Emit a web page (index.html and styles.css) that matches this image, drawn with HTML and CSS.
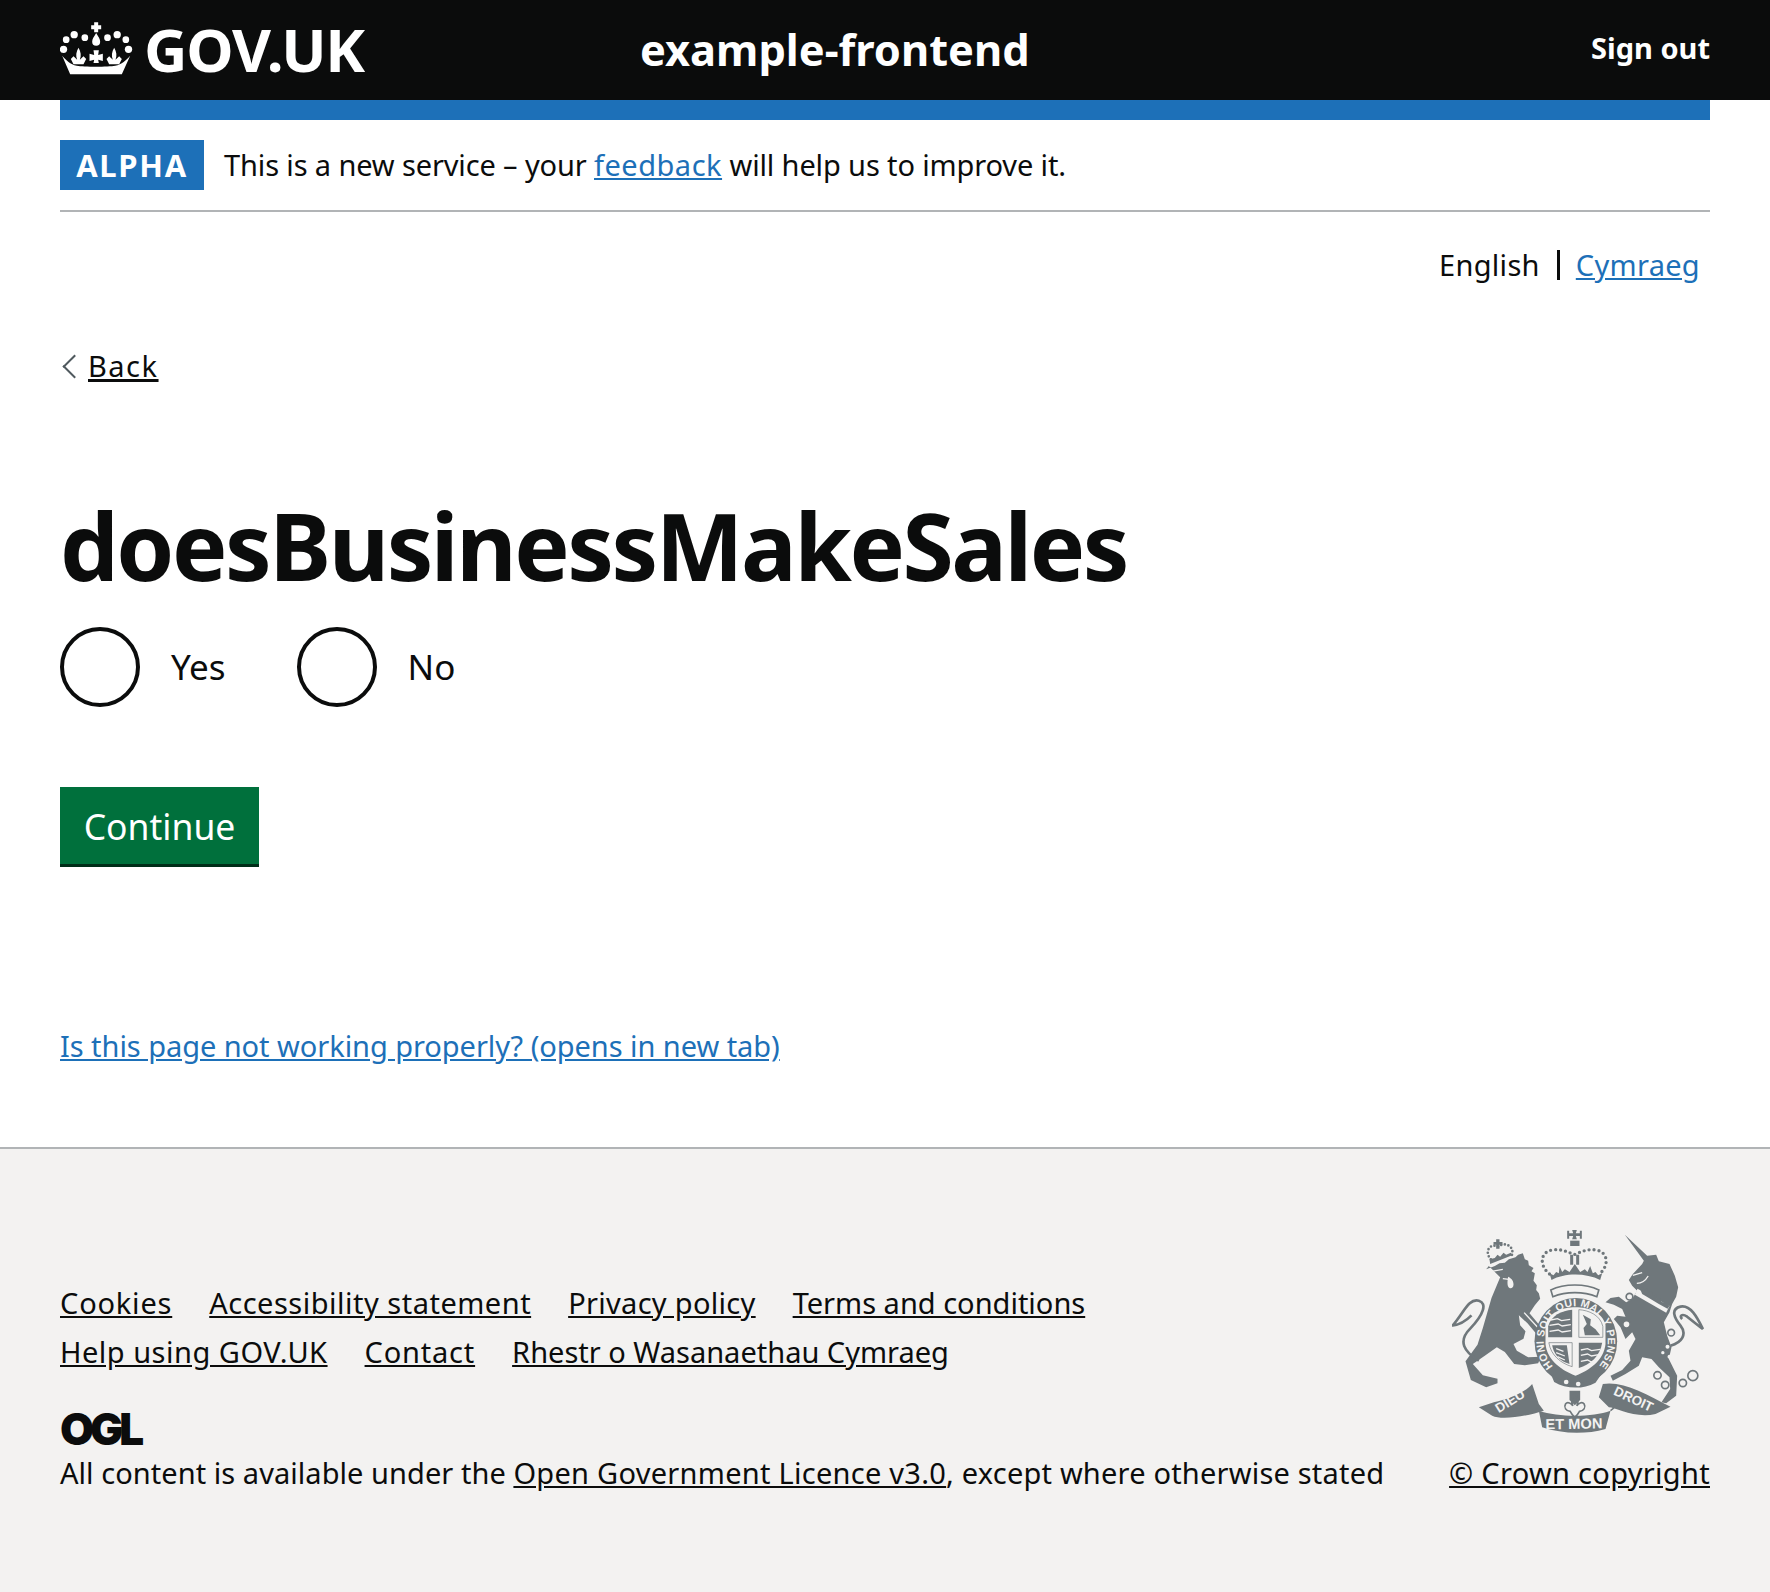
FILE: index.html
```html
<!DOCTYPE html>
<html lang="en">
<head>
  <title>doesBusinessMakeSales</title>
  <link rel="stylesheet" href="styles.css">
</head>
<body>
<header class="header">
  <a class="logo" href="#">
    <svg class="crown" viewBox="60 62 218 162">
      <path d="M162 66h12v9h9v12h-9v9h-12v-9h-9v-12h9z"/>
      <path d="M168 98c7 12 12 18 12 26a12 12 0 0 1-24 0c0-8 5-14 12-26z"/>
      <circle cx="102" cy="103" r="11"/><circle cx="134" cy="112" r="10"/>
      <circle cx="202" cy="112" r="10"/><circle cx="231" cy="103" r="11"/>
      <circle cx="78" cy="118" r="10"/><circle cx="257" cy="118" r="10"/>
      <circle cx="70" cy="147" r="11"/><circle cx="265" cy="147" r="11"/>
      <path d="M115 142c7 13 9 23 4 36l11-10 8 8-8 16h-30l-8-16 8-8 11 10c-5-13-3-23 4-36z"/>
      <path d="M222 142c7 13 9 23 4 36l11-10 8 8-8 16h-30l-8-16 8-8 11 10c-5-13-3-23 4-36z"/>
      <path d="M160 150h16l-2 14 14-4v22l-14-4 2 10h-16l2-10-14 4v-22l14 4z"/>
      <path d="M66 166c12 14 24 26 44 30 20 4 95 4 115 0 20-4 33-16 45-30l-25 56H90z"/>
    </svg>
    <span class="logo-text">GOV.UK</span>
  </a>
  <a class="service-name" href="#">example-frontend</a>
  <a class="sign-out" href="#">Sign out</a>
</header>

<div class="wrapper">
  <div class="blue-bar"></div>
  <div class="banner">
    <strong class="tag">ALPHA</strong>
    <span class="banner-text">This is a new service – your <a class="link" href="#">feedback</a> will help us to improve it.</span>
  </div>

  <nav class="language">
    <span class="lang-current">English</span>
    <a class="link" href="#">Cymraeg</a>
  </nav>

  <a class="back" href="#"><span class="chevron"></span><span class="back-text">Back</span></a>

  <main>
    <h1>doesBusinessMakeSales</h1>
    <div class="radios">
      <label class="radio"><span class="circle"></span>Yes</label>
      <label class="radio"><span class="circle"></span>No</label>
    </div>
    <button class="button">Continue</button>
    <p class="help"><a class="link" href="#">Is this page not working properly? (opens in new tab)</a></p>
  </main>
</div>

<footer class="footer">
  <div class="footer-left">
    <ul class="footer-links">
      <li class="wide"><a href="#">Cookies</a></li>
      <li class="spaced"><a href="#">Accessibility statement</a></li>
      <li><a href="#">Privacy policy</a></li>
      <li class="tight"><a href="#">Terms and conditions</a></li>
    </ul>
    <ul class="footer-links">
      <li class="spaced"><a href="#">Help using GOV.UK</a></li>
      <li class="wide"><a href="#">Contact</a></li>
      <li class="tight"><a href="#">Rhestr o Wasanaethau Cymraeg</a></li>
    </ul>
    <div class="ogl">OGL</div>
    <p class="licence">All content is available under the <a href="#">Open Government Licence v3.0</a><span class="licence-end">, except where otherwise stated</span></p>
  </div>
  <div class="footer-right">
    <svg class="crest" viewBox="70 55 755 615">
      <!-- small crown over the lion -->
      <path class="crest-dots" d="M186 146c-22-25 0-50 22-38 22-18 52 2 40 28"/>
      <path d="M202 86h10v8h9v8h-9v12h-10v-12h-8v-8h8z"/>
      <path d="M182 146l16-4 8-10 8 6 10-12 8 6 14-6 4 8-66 26z"/>
      <!-- lion -->
      <path d="M172 176l26-10 14-8 16-2 12-10 20-6 8-8 14-4 6 18 10 4 2 14 14 8-6 10 10 6-4 22 10 14-2 14 8 10 4 16-16 20-16 24 44 52-18 16-32-38-26-24 4 30 16 18-6 22-30 16 10 20 34 20 38-2-8 20-40 6-32-4-28-36-24-14-34 24-38 26 30 34 44 10v14l-34 12-46-22-16-56 36-50 16-50 26-90 26-62-34-34z"/>
      <path class="crest-line" d="M150 450c-44-26-64-58-26-96 40-42 52-76 26-84-30-8-44 34-78 74 20-2 40-14 56-30"/>
      <path class="crest-gap" d="M188 182l34-6M222 204l18 2"/>
      <path d="M238 198c12 6 16 14 16 24 0 8-6 12-12 10-6-4-8-14-4-34z" fill="#f3f2f1"/>
      <path class="crest-gap" d="M286 306l48 52M300 360l14 24"/>
      <!-- unicorn -->
      <path d="M588 72l67 63 27-3 8 20 32 8 16 35 10 35-6 28-12 22-8 25-17 30 10 40 13 35-8 35 25 50-3 60-30 23-14-3 26-40-2-35-32-30-22-25-28-5-10 25-40 25-38 20-7-15 35-17 25-28-5-30 20-35-10-20-20 20-15-35-20-25 10-10 25 3-10-23-25-13-25-7 15-13 25-4 22 17 18-10 15-25-15-15-10-17 12-18 28-30 5-10z"/>
      <path class="crest-gap" d="M612 194l28-8M624 218c14 0 26-8 34-22"/>
      <path d="M626 234l96 52-10 20-94-54z" fill="#f3f2f1"/>
      <path d="M634 236l6-10 6 10 10-2 2 12 10-4 4 12 10-2 2 12 10-2 4 12 14 2 10 10-6 8-26-14-26-16-24-14z"/>
      <path class="crest-line" d="M725 405c35-10 50-35 30-60-20-25-30-50 0-57 30-6 50 32 67 67-17-13-32-25-47-37-15-10-25-3-15 7"/>
      <g class="crest-rings">
        <circle cx="602" cy="258" r="10"/><circle cx="593" cy="341" r="11"/>
        <circle cx="727" cy="366" r="10"/><circle cx="686" cy="494" r="11"/>
        <circle cx="792" cy="495" r="15"/><circle cx="762" cy="517" r="11"/>
        <circle cx="709" cy="523" r="11"/>
      </g>
      <g fill="#f3f2f1"><circle cx="716" cy="408" r="6"/><circle cx="702" cy="426" r="5"/><circle cx="722" cy="438" r="6"/></g>
      <!-- royal crown -->
      <path d="M430 58h14l-3 10h12v-8h6v24h-6v-8h-12l3 10h-14l3-10h-12v8h-6V60h6v8h12z"/>
      <path d="M424 90h28v16h-28z"/>
      <path d="M424 132h9v30h-9zM442 132h9v30h-9z"/>
      <path class="crest-dots crest-dots-big" d="M362 190c-32-26-28-66 8-72 24-4 44 4 66 14 22-10 44-18 66-14 36 6 40 46 10 72"/>
      <path d="M392 166l8 18 8-8 14 8 16-24 16 24 14-8 8 8 8-18 8 22 8-4 8 10 12-6-6 20c-42-22-108-22-146 0l-6-20 12 6 8-10 8 4z"/>
      <path class="crest-line crest-thin" d="M366 238c40-20 104-20 144 0l-6 20c-40-16-92-16-132 0z"/>
      <!-- garter and shield -->
      <ellipse cx="441" cy="392" rx="124" ry="130"/>
      <path d="M350 342c10-36 50-52 90-52s80 16 90 52v58c-5 50-50 80-90 95-40-15-85-45-90-95z" fill="#f3f2f1"/>
      <path d="M358 347c7-32 42-48 72-50v83h-72z"/>
      <path d="M450 297c30 2 64 16 72 50v33h-72z" class="shield-field"/>
      <path d="M462 312l24 14-2 18 16 12 14 18h-46l-4-22 10-12z"/>
      <path d="M360 396h70v72c-34-10-64-34-70-72z" class="shield-field"/>
      <path d="M370 404h44l8 56-16-6c-20-10-32-28-36-50z"/>
      <path d="M450 396h70c-6 40-36 66-70 76z"/>
      <g class="crest-gap">
        <path d="M366 328l20-4 12 6 26-4M362 344l26-4 12 6 26-4M362 362l26-4 12 6 26-4"/>
        <path d="M456 418l20-4 12 6 26-4M456 434l20-4 12 6 22-4M456 452l20-4 12 6 14-4"/>
        <path d="M382 414l22 8M382 426l26 10M386 438l22 10"/>
      </g>
      <path id="garter" d="M373 467A96 106 0 1 1 509 467" fill="none"/>
      <text class="crest-text crest-garter" font-size="32"><textPath href="#garter">HONI SOIT QUI MAL Y PENSE</textPath></text>
      <path d="M366 490c30 28 110 42 152 0l-18 26c-40 22-90 18-124-2z"/>
      <circle cx="412" cy="514" r="7" fill="#f3f2f1"/><circle cx="448" cy="520" r="7" fill="#f3f2f1"/>
      <!-- motto ribbon -->
      <path d="M150 590l45-15c45-10 95-30 115-55l20 60 15 20c-45 15-125 30-155 15z"/>
      <path d="M330 600c60 20 160 20 215 0l-15 55c-60 17-130 15-190-5z"/>
      <path class="crest-line crest-thin" d="M330 600c-14-10-20-18-22-28M545 600c12-8 18-18 20-28"/>
      <path d="M522 520c60-10 128 30 203 68l-45 22c-60 15-120-20-140-20l-30-30z"/>
      <!-- fleur de lis -->
      <path d="M422 540h32v28l-16 16-16-16z"/>
      <path class="crest-line crest-thin" d="M438 548c10 12 12 24 6 38 4-8 16-14 22-6 6 10-2 22-14 22-4 8-8 12-14 18-6-6-10-10-14-18-12 0-20-12-14-22 6-8 18-2 22 6-6-14-4-26 6-38z" fill="#f3f2f1"/>
      <text class="crest-text" font-size="40" letter-spacing="4" transform="translate(210 608) rotate(-32)">DIEU</text>
      <text class="crest-text" font-size="44" transform="translate(350 656) rotate(-1)">ET MON</text>
      <text class="crest-text" font-size="40" transform="translate(552 551) rotate(25)">DROIT</text>
    </svg>
    <a class="copyright" href="#">© Crown copyright</a>
  </div>
</footer>
</body>
</html>
```

FILE: styles.css
```css
body {
    margin: 0;
    font-family: "Noto Sans", sans-serif;
    font-size: 29px;
    line-height: 38px;
    color: #0b0c0c;
    background: #fff;
}

a {
    color: inherit;
}

.link {
    color: #1d70b8;
}

/* header */
.header {
    display: grid;
    grid-template-columns: 580px 1fr auto;
    align-items: center;
    height: 100px;
    padding: 0 60px;
    background: #0b0c0c;
    color: #fff;
}

.header a {
    color: #fff;
    text-decoration: none;
}

.logo {
    display: flex;
    align-items: center;
    gap: 11px;
}

.crown {
    width: 73px;
    height: 54px;
    margin-top: -4px;
    fill: #fff;
}

.logo-text {
    margin-top: -2px;
    font-size: 60px;
    line-height: 60px;
    font-weight: 700;
    letter-spacing: -1.2px;
}

.service-name {
    font-size: 43.4px;
    font-weight: 700;
}

.sign-out {
    margin-top: -4px;
    font-size: 29px;
    font-weight: 700;
}

/* banner */
.wrapper {
    padding: 0 60px;
}

.blue-bar {
    height: 20px;
    background: #1d70b8;
}

.banner {
    display: flex;
    align-items: center;
    gap: 20px;
    padding: 20px 0;
    border-bottom: 2px solid #b1b4b6;
}

.banner-text {
    letter-spacing: -.13px;
}

.banner-text a {
    letter-spacing: .5px;
}

.tag {
    display: block;
    width: 144px;
    height: 50px;
    line-height: 50px;
    text-align: center;
    background: #1d70b8;
    color: #fff;
    font-size: 31px;
    letter-spacing: 1.7px;
}

.language {
    display: flex;
    justify-content: flex-end;
    align-items: center;
    padding: 34px 10px 0 0;
    letter-spacing: .3px;
}

.lang-current {
    padding-right: 17px;
    margin-right: 16px;
    line-height: 30px;
    border-right: 3px solid #0b0c0c;
}

.back {
    display: inline-flex;
    align-items: center;
    gap: 5px;
    margin-top: 63px;
    letter-spacing: 1.5px;
    text-decoration: none;
}

.chevron {
    width: 15px;
    height: 15px;
    margin-left: 6px;
    border-left: 2px solid #505a5f;
    border-bottom: 2px solid #505a5f;
    transform: rotate(45deg);
}

.back-text {
    text-decoration: underline;
    text-decoration-thickness: 3px;
}

/* question */
h1 {
    margin: 100px 0 0;
    font-size: 93px;
    line-height: 120px;
    font-weight: 700;
    letter-spacing: -2.46px;
}

.radios {
    display: flex;
    gap: 71px;
    margin-top: 22px;
}

.radio {
    display: flex;
    align-items: center;
    gap: 31px;
    font-size: 35px;
}

.circle {
    width: 80px;
    height: 80px;
    box-sizing: border-box;
    border: 4px solid #0b0c0c;
    border-radius: 50%;
}

.button {
    display: block;
    width: 199px;
    height: 77px;
    margin-top: 80px;
    padding: 0;
    border: 0;
    background: #00703c;
    box-shadow: 0 3px 0 #002d18;
    color: #fff;
    font-family: inherit;
    font-size: 35.5px;
}

.help {
    margin: 163px 0 82px;
    letter-spacing: -.05px;
}

/* footer */
.footer {
    display: flex;
    justify-content: space-between;
    align-items: flex-end;
    height: 445px;
    box-sizing: border-box;
    padding: 0 60px 100px;
    background: #f3f2f1;
    border-top: 2px solid #b1b4b6;
}

.footer-links {
    display: flex;
    gap: 37px;
    margin: 0 0 11px;
    padding: 0;
    list-style: none;
    letter-spacing: .3px;
}

.wide {
    letter-spacing: .8px;
}

.spaced {
    letter-spacing: .5px;
}

.tight {
    letter-spacing: 0;
}

.ogl {
    margin-top: 41px;
    font-size: 44px;
    line-height: 34px;
    font-weight: 900;
    font-family: "Inter", sans-serif;
    letter-spacing: -4px;
}

.licence {
    margin: 8px 0 0;
    letter-spacing: .05px;
}

.licence a {
    letter-spacing: .27px;
}

.licence-end {
    letter-spacing: .2px;
}

.footer-right {
    display: flex;
    flex-direction: column;
    align-items: flex-end;
    letter-spacing: .3px;
}

.crest {
    display: block;
    width: 252px;
    height: 205px;
    margin: 0 6px 20px 0;
    fill: #6f777b;
}

.crest-text {
    fill: #f3f2f1;
    font-family: "Liberation Sans", sans-serif;
    font-weight: 700;
    letter-spacing: 0;
}

.crest-garter {
    letter-spacing: 1px;
}

.crest-dots {
    fill: none;
    stroke: #6f777b;
    stroke-width: 8;
    stroke-dasharray: 0 11;
    stroke-linecap: round;
}

.crest-dots-big {
    stroke-width: 10;
    stroke-dasharray: 0 15;
}

.crest-line {
    fill: none;
    stroke: #6f777b;
    stroke-width: 8;
}

.crest-thin {
    stroke-width: 5;
}

.crest-gap {
    fill: none;
    stroke: #f3f2f1;
    stroke-width: 4;
}

.crest-rings {
    fill: #f3f2f1;
    stroke: #6f777b;
    stroke-width: 5;
}

.shield-field {
    fill: #f3f2f1;
    stroke: #6f777b;
    stroke-width: 2;
}
```
